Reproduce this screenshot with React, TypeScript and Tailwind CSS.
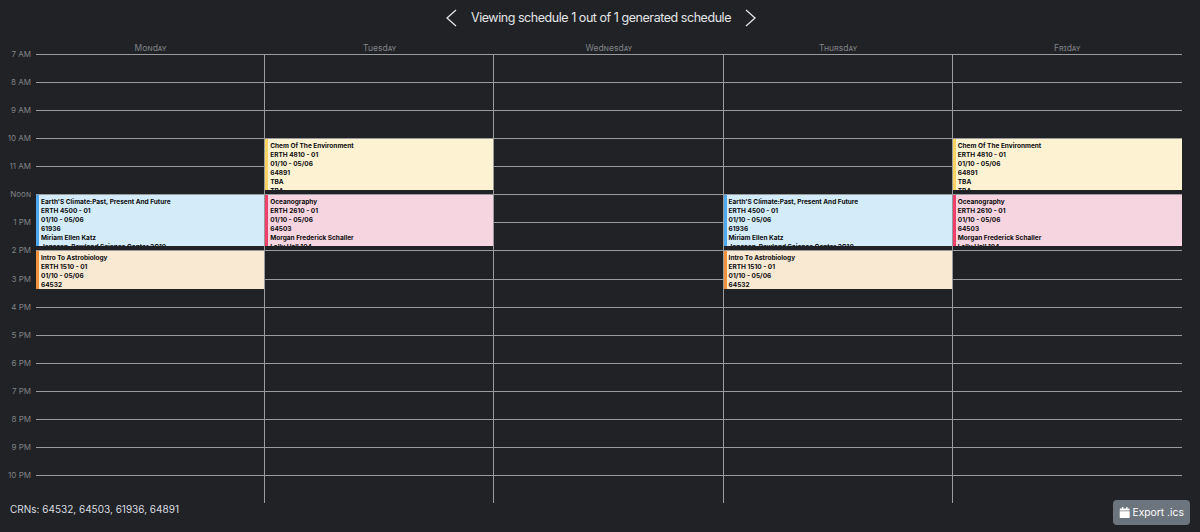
import { FaCalendar } from 'react-icons/fa'

const ROW_H = 28.07

const hours = ['7 AM', '8 AM', '9 AM', '10 AM', '11 AM', 'Noon', '1 PM', '2 PM', '3 PM', '4 PM', '5 PM', '6 PM', '7 PM', '8 PM', '9 PM', '10 PM']

type Course = {
  lines: string[]
  start: number
  height: number
  bg: string
}

const chem: Course = {
  lines: ['Chem Of The Environment', 'ERTH 4810 - 01', '01/10 - 05/06', '64891', 'TBA', 'TBA'],
  start: 10,
  height: 51,
  bg: 'bg-[#fdf3d3] border-[#fdd365]',
}
const ocean: Course = {
  lines: ['Oceanography', 'ERTH 2610 - 01', '01/10 - 05/06', '64503', 'Morgan Frederick Schaller', 'Lally Hall 104'],
  start: 12,
  height: 51,
  bg: 'bg-[#f7d5e0] border-[#ef3f6b]',
}
const climate: Course = {
  lines: ["Earth'S Climate:Past, Present And Future", 'ERTH 4500 - 01', '01/10 - 05/06', '61936', 'Miriam Ellen Katz', 'Jonsson-Rowland Science Center 2C10'],
  start: 12,
  height: 51,
  bg: 'bg-[#d4ecf9] border-[#4fa8ec]',
}
const astro: Course = {
  lines: ['Intro To Astrobiology', 'ERTH 1510 - 01', '01/10 - 05/06', '64532'],
  start: 14,
  height: 37.5,
  bg: 'bg-[#f9e8d2] border-[#f0913c]',
}

const days = [
  { name: 'Monday', courses: [climate, astro] },
  { name: 'Tuesday', courses: [chem, ocean] },
  { name: 'Wednesday', courses: [] },
  { name: 'Thursday', courses: [climate, astro] },
  { name: 'Friday', courses: [chem, ocean] },
]

function CourseBlock({ course }: { course: Course }) {
  return (
    <div
      className={`absolute left-0 right-0 overflow-hidden border-l-[3px] pl-[2px] pt-[3px] text-[6.5px] font-bold leading-[9px] text-[#0c0c0e] ${course.bg}`}
      style={{ top: (course.start - 7) * ROW_H + 0.6, height: course.height }}
    >
      {course.lines.map((line) => (
        <div key={line} className="whitespace-nowrap">{line}</div>
      ))}
    </div>
  )
}

export default function App() {
  return (
    <div className="h-[532px] w-[1200px] overflow-hidden bg-[#202226] font-['Inter',sans-serif]">
      <div className="flex h-[36px] items-center justify-center pl-[2px] text-[#e4e5e7]">
        <svg width="12" height="18" viewBox="0 0 12 18" fill="none" stroke="currentColor" strokeWidth="1.3">
          <path d="M11 1 L2 9 L11 17" />
        </svg>
        <span className="mx-[14px] text-[12.5px] tracking-[-0.45px]">Viewing schedule 1 out of 1 generated schedule</span>
        <svg width="12" height="18" viewBox="0 0 12 18" fill="none" stroke="currentColor" strokeWidth="1.3">
          <path d="M1 1 L10 9 L1 17" />
        </svg>
      </div>

      <div className="flex pl-[36px]">
        {days.map((day) => (
          <div key={day.name} className="flex h-[18px] w-[229.2px] items-end justify-center text-[8.5px] leading-[11px] text-[#808285] [font-variant:small-caps]">
            {day.name}
          </div>
        ))}
      </div>

      <div className="flex">
        <div className="w-[36px] shrink-0">
          {hours.map((h) => (
            <div key={h} className="relative h-[28.07px]">
              <span className="absolute right-[5px] top-[-6px] whitespace-nowrap text-[8px] leading-[12px] text-[#808285] [font-variant:small-caps]">
                {h}
              </span>
            </div>
          ))}
        </div>
        {days.map((day, i) => (
          <div key={day.name} className={`relative w-[229.2px] ${i < 4 ? 'border-r border-[#9a9b9d]' : ''}`}>
            {hours.map((h) => (
              <div key={h} className="h-[28.07px] border-t border-[#9a9b9d]" />
            ))}
            {day.courses.map((c) => (
              <CourseBlock key={c.lines[0]} course={c} />
            ))}
          </div>
        ))}
      </div>

      <div className="flex items-start justify-between px-[10px]">
        <span className="-mt-[1px] text-[10px] leading-[14px] text-[#dcdde0]">CRNs: 64532, 64503, 61936, 64891</span>
        <button className="flex h-[25px] w-[77px] -translate-y-[3px] items-center justify-center gap-[2px] rounded-[4px] bg-[#6c757d] text-[10.3px] text-white">
          <FaCalendar className="text-[11.4px]" />
          Export .ics
        </button>
      </div>
    </div>
  )
}
